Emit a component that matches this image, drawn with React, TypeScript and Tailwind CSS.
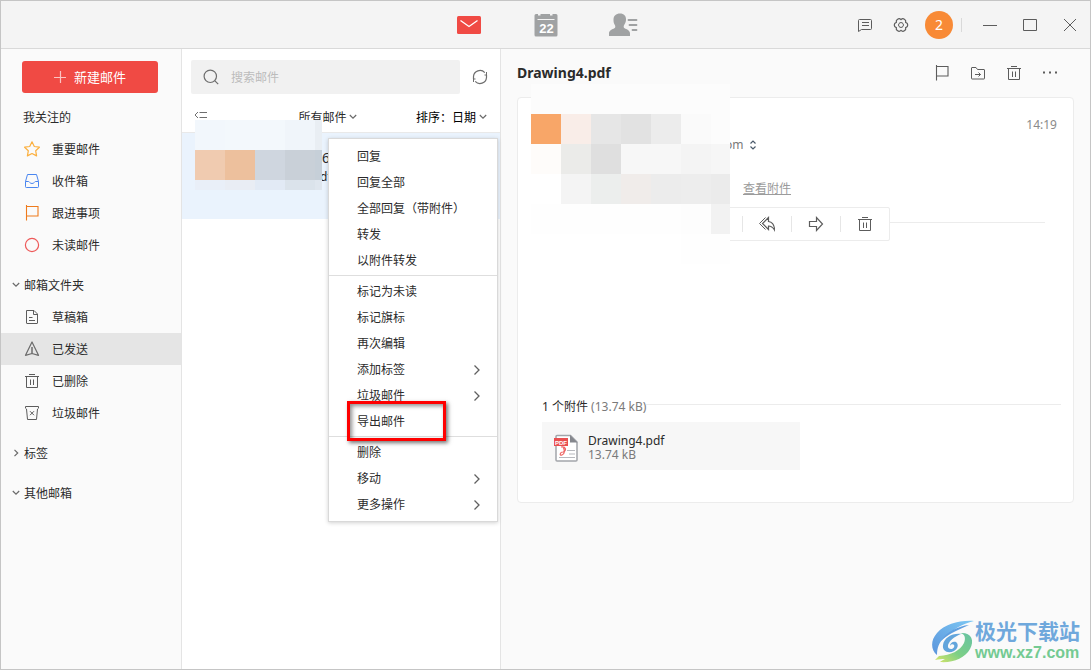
import React, { useState } from 'react';

interface GlyphProps {
  children: React.ReactNode;
  className?: string;
  size?: number;
}

const Glyph: React.FC<GlyphProps> = ({ children, className = '', size = 16 }) => (
  <svg
    width={size}
    height={size}
    viewBox="0 0 16 16"
    fill="none"
    stroke="currentColor"
    strokeWidth="1"
    className={`shrink-0 ${className}`}
    aria-hidden="true"
  >
    {children}
  </svg>
);

const StarIcon = () => (
  <Glyph className="text-[#fbb040]">
    <path
      d="M8 .8l2.3 4.7 5.1.7-3.7 3.6.9 5.1L8 12.5l-4.6 2.4.9-5.1L.6 6.2l5.1-.7z"
      strokeWidth="1.2"
      strokeLinejoin="round"
    />
  </Glyph>
);

const InboxIcon = () => (
  <Glyph className="text-[#4a86f0]">
    <path d="M3.5 1.5h9l2 7v5.2a.8.8 0 0 1-.8.8H2.3a.8.8 0 0 1-.8-.8V8.5z" strokeLinejoin="round" />
    <path d="M1.5 8.5h3c1 0 1.2 2 3.5 2s2.500-2 3.500-2h3" />
  </Glyph>
);

const FlagIcon = ({ className = '' }: { className?: string }) => (
  <Glyph className={className}>
    <path d="M2.500 0v15.500M2.500 1.500h11.500v9.500H2.500" strokeWidth="1.1" />
  </Glyph>
);

const CircleIcon = () => (
  <Glyph className="text-[#ee5a5a]">
    <circle cx="8" cy="8" r="6.600" strokeWidth="1.2" />
  </Glyph>
);

const DraftIcon = () => (
  <Glyph className="text-[#5c5c5c]">
    <path d="M2.500 1.500h7.500l3.500 3.500v9a.5.5 0 0 1-.5.5H3a.5.5 0 0 1-.5-.5zM9.500 1.500v4h4M5 8.500h3.500M5 11.500h6" />
  </Glyph>
);

const SentIcon = () => (
  <Glyph className="text-[#6b6b6b]">
    <path d="M8 1L1.500 14.300 8 12.500l6.500 1.800z" strokeWidth="1.200" strokeLinejoin="round" />
    <path d="M8 6v6.500" strokeWidth="1.500" />
  </Glyph>
);

const TrashIcon = () => (
  <Glyph className="text-[#5c5c5c]">
    <path d="M5 1.500h6M1 3.500h14M2.500 3.500v11h11v-11M6.500 6.500v5.500M9.500 6.500v5.500" />
  </Glyph>
);

const SpamIcon = () => (
  <Glyph className="text-[#5c5c5c]">
    <path d="M1.500 1.500h13v1.700l-1 .8-1 10.500h-9L2.500 4l-1-.8z" strokeLinejoin="round" />
    <path d="M6 6.200l4 4M10 6.200l-4 4" />
  </Glyph>
);

const Chevron = ({ direction }: { direction: 'down' | 'right' }) => (
  <svg
    width="8"
    height="10"
    viewBox="0 0 8 10"
    fill="none"
    stroke="#6a6a6a"
    strokeWidth="1.200"
    className="shrink-0"
    aria-hidden="true"
  >
    <path d={direction === 'down' ? 'M.8 3L4 6.200 7.200 3' : 'M2.500 1.800L5.700 5 2.500 8.200'} />
  </svg>
);

const MailIcon = () => (
  <svg width="24" height="18" viewBox="0 0 24 18" aria-hidden="true">
    <rect width="24" height="18" rx="1.500" fill="#f04a44" />
    <path d="M3.500 4.500L12 10.500l8.500-6" fill="none" stroke="#fff" strokeWidth="1.300" />
  </svg>
);

const CalendarIcon = () => (
  <svg width="24" height="24" viewBox="0 0 24 24" aria-hidden="true">
    <path
      d="M2 1h2v1.500h2.500V1h9.500v1.500h2.500V1H22q1.500 0 1.500 1.500V22q0 1.500-1.500 1.500H2Q.5 23.500.5 22V2.500Q.5 1 2 1z"
      fill="#a0a2a3"
    />
    <path d="M3.500 6.500h17" stroke="#f4f4f4" />
    <text x="12.500" y="19.500" textAnchor="middle" fontSize="13" fontWeight="700" fill="#fff" fontFamily="Liberation Sans, sans-serif">
      22
    </text>
  </svg>
);

const ContactIcon = () => (
  <svg width="30" height="24" viewBox="0 0 30 24" aria-hidden="true">
    <path
      d="M12 .5c4 0 6 2.400 6 6 0 2-.6 3.800-1.700 5.200-.9 1.100-.8 2.900.3 3.600 2 1.100 5.400 2 5.400 5.200v2.500H1v-2.500c0-3.200 3.400-4.100 5.400-5.200 1.100-.7 1.200-2.500.3-3.600C5.600 10.300 5.500 8.500 5.500 6.500c0-3.600 2.500-6 6.500-6z"
      fill="#a0a2a3"
    />
    <path d="M20.500 7h8M21.500 12h7M24.500 17h4" stroke="#a0a2a3" strokeWidth="1.800" strokeLinecap="round" />
  </svg>
);

const SwirlLogo = () => (
  <svg width="44" height="44" viewBox="0 0 44 44" aria-hidden="true">
    <defs>
      <linearGradient id="swirlBlue" x1="0" y1="1" x2="1" y2="0">
        <stop offset="0" stopColor="#5b95dc" />
        <stop offset="1" stopColor="#7cc8f4" />
      </linearGradient>
      <linearGradient id="swirlGreen" x1="0" y1="1" x2="1" y2="0">
        <stop offset="0" stopColor="#d9e667" />
        <stop offset=".45" stopColor="#7ccf86" />
        <stop offset="1" stopColor="#67c3a4" />
      </linearGradient>
    </defs>
    {/* outer blue crescent with its trailing streaks */}
    <path d="M43 2C29 1 14 5 6 14c-7 8-6 17 0 22 0-7 2-13 8-18C21 11 31 5 43 2z" fill="url(#swirlBlue)" />
    <path d="M38 6C27 7 15 13 10 22c3-3 7-6 11-8 5-3 11-5 17-8z" fill="#5f9fe0" />
    <path d="M30 15c-9-1-17 4-18 11-1 6 5 9 11 6 4-2 5-7 2-9-3-1-6 1-6 4 1-2 3-2 4-1 1 2-1 4-3 4-3 0-4-3-2-6 2-4 7-7 12-9z" fill="#62a5dc" />
    {/* green sweep */}
    <path d="M29 14c5 1 6 5 4 10-4 8-13 12-25 13l-4 4c4-1 7-1 10-1-2 1-4 2-5 3 13 1 25-4 30-13 5-9 1-17-10-16z" fill="url(#swirlGreen)" />
  </svg>
);

const PdfIcon = () => (
  <svg width="26" height="28" viewBox="0 0 26 28" aria-hidden="true">
    <path d="M3 1.500h13.500L23 8v18q0 1-1 1H3q-1 0-1-1V2.500q0-1 1-1z" fill="#fff" stroke="#a3a5aa" strokeWidth="1.500" />
    <path d="M16 1l7.500 7.500H16z" fill="#85878d" />
    <path d="M13 16.500h8M15 20h6M5 23.500h16" stroke="#b7b9be" />
    <rect y="4" width="14" height="8" fill="#e94f50" />
    <text x="7" y="10.500" textAnchor="middle" fontSize="6" fontWeight="700" fill="#fff" fontFamily="Liberation Sans, sans-serif">
      PDF
    </text>
    <path d="M7 13c5-1 6 4 2 5-3 0-4 4-1 3 3-1 3-5 1-8" fill="none" stroke="#ed6463" strokeWidth="1.200" />
  </svg>
);

const favorites = [
  { label: '重要邮件', icon: <StarIcon /> },
  { label: '收件箱', icon: <InboxIcon /> },
  { label: '跟进事项', icon: <FlagIcon className="text-[#ee7b1d]" /> },
  { label: '未读邮件', icon: <CircleIcon /> },
];

const folders = [
  { label: '草稿箱', icon: <DraftIcon /> },
  { label: '已发送', icon: <SentIcon /> },
  { label: '已删除', icon: <TrashIcon /> },
  { label: '垃圾邮件', icon: <SpamIcon /> },
];

const menuGroups = [
  [{ label: '回复' }, { label: '回复全部' }, { label: '全部回复（带附件）' }, { label: '转发' }, { label: '以附件转发' }],
  [
    { label: '标记为未读' },
    { label: '标记旗标' },
    { label: '再次编辑' },
    { label: '添加标签', submenu: true },
    { label: '垃圾邮件', submenu: true },
    { label: '导出邮件', marked: true },
  ],
  [{ label: '删除' }, { label: '移动', submenu: true }, { label: '更多操作', submenu: true }],
] as { label: string; submenu?: boolean; marked?: boolean }[][];

const listMosaic = [
  'bg-[#f2f7fc]', 'bg-[#f3f8fc]', 'bg-[#f3f8fc]', 'bg-[#f0f5fa]', 'bg-[#e9eef3]',
  'bg-[#f0cbb0]', 'bg-[#edc09d]', 'bg-[#cfd6df]', 'bg-[#c9d0d8]', 'bg-[#c6cfd8]',
  'bg-[#e9eff8]', 'bg-[#e9edf4]', 'bg-[#e2eaf5]', 'bg-[#dbe3eb]', 'bg-[#dfe6ee]',
];

const senderMosaic = [
  'bg-[#fcfcfc]', 'bg-[#fcfcfc]', 'bg-[#fcfcfc]', 'bg-[#fcfcfc]', 'bg-[#fcfcfc]', 'bg-[#fcfcfc]', 'bg-[#fcfcfc]',
  'bg-[#f8a668]', 'bg-[#f9ede8]', 'bg-[#e6e6e6]', 'bg-[#e2e2e2]', 'bg-[#ececec]', 'bg-[#fafafa]', 'bg-[#fcfcfc]',
  'bg-[#fefcfa]', 'bg-[#ebebe9]', 'bg-[#dfdfdf]', 'bg-[#f7f7f7]', 'bg-[#f7f7f7]', 'bg-[#f4f4f4]', 'bg-[#f6f6f6]',
  'bg-white', 'bg-[#f4f4f4]', 'bg-[#eceeed]', 'bg-[#f0ecea]', 'bg-[#ececec]', 'bg-[#ededed]', 'bg-[#ebebeb]',
  'bg-[#fefefe]', 'bg-[#fefefe]', 'bg-[#fefefe]', 'bg-[#fefefe]', 'bg-[#fefefe]', 'bg-[#fdfdfd]', 'bg-[#f2f2f2]',
  'bg-white', 'bg-white', 'bg-white', 'bg-white', 'bg-white', 'bg-[#fefefe]', 'bg-[#fefefe]',
];

const TopBar = () => (
  <header className="flex h-12 items-center border-b border-[#d9d9d9] bg-[#f4f4f4] text-[#5c5c5c]">
    <div className="flex-1" />
    <nav className="flex items-center gap-[29px]">
      <button aria-label="邮件" className="flex h-10 w-12 items-center justify-center"><MailIcon /></button>
      <button aria-label="日历" className="flex h-10 w-12 items-center justify-center"><CalendarIcon /></button>
      <button aria-label="联系人" className="flex h-10 w-12 items-center justify-center"><ContactIcon /></button>
    </nav>
    <div className="flex flex-1 items-center justify-end">
      <button aria-label="反馈" className="flex h-9 w-9 items-center justify-center">
        <Glyph>
          <path d="M2.500 2.500h11q1 0 1 1v8q0 1-1 1H4.500L1.500 14.500v-11q0-1 1-1zM5 5.500h7M5 8.500h7" />
        </Glyph>
      </button>
      <button aria-label="设置" className="flex h-9 w-9 items-center justify-center">
        <Glyph>
          <path
            d="M8 2.600A2.800 2.800 0 0 1 12.680 5.300 2.800 2.800 0 0 1 12.680 10.700 2.800 2.800 0 0 1 8 13.400 2.800 2.800 0 0 1 3.320 10.700 2.800 2.800 0 0 1 3.320 5.300 2.800 2.800 0 0 1 8 2.600z"
            strokeWidth="1.200"
          />
          <path d="M6.700 5.700h2.600L10.600 8l-1.300 2.300H6.700L5.400 8z" strokeLinejoin="round" />
        </Glyph>
      </button>
      <button className="ml-1.5 h-7 w-7 rounded-full bg-[#f88a36] text-sm text-white">2</button>
      <div className="ml-2 mr-2 h-3.5 w-px bg-[#d9d9d9]" />
      <button aria-label="最小化" className="flex h-10 w-10 items-center justify-center">
        <Glyph><path d="M1 8.500h14" /></Glyph>
      </button>
      <button aria-label="最大化" className="flex h-10 w-10 items-center justify-center">
        <Glyph><path d="M1.500 2.500h13v11h-13z" /></Glyph>
      </button>
      <button aria-label="关闭" className="flex h-10 w-10 items-center justify-center">
        <Glyph><path d="M2 2l12 12M14 2L2 14" /></Glyph>
      </button>
    </div>
  </header>
);

interface SectionTitleProps {
  label: string;
  direction: 'down' | 'right';
}

const SectionTitle: React.FC<SectionTitleProps> = ({ label, direction }) => (
  <button className="mt-2 flex h-8 w-full items-center gap-1 pl-[11px]">
    <Chevron direction={direction} />
    <span className="pt-0.5">{label}</span>
  </button>
);

const Sidebar = () => {
  const [selected, setSelected] = useState('已发送');

  const renderItem = ({ label, icon }: { label: string; icon: React.ReactNode }) => (
    <button
      key={label}
      onClick={() => setSelected(label)}
      className={`flex h-8 w-full items-center gap-3 pl-[23px] ${selected === label ? 'bg-[#e5e5e5]' : ''}`}
    >
      {icon}
      <span className="pt-0.5">{label}</span>
    </button>
  );

  return (
    <aside className="w-[181px] shrink-0 border-r border-[#e4e4e4] pt-3">
      <button className="mb-2 ml-[21px] flex h-8 w-[136px] items-center justify-center gap-1.5 rounded-[3px] bg-[#f04a44] pr-0.5 text-[13px] text-white">
        <Glyph className="text-[#fbc4c2]"><path d="M2 8.500h12M8.500 2v12" strokeWidth="1.200" /></Glyph>
        <span className="pt-0.5">新建邮件</span>
      </button>
      <h2 className="flex h-8 items-center pl-[22px] pt-0.5">我关注的</h2>
      {favorites.map(renderItem)}
      <SectionTitle label="邮箱文件夹" direction="down" />
      {folders.map(renderItem)}
      <SectionTitle label="标签" direction="right" />
      <SectionTitle label="其他邮箱" direction="down" />
    </aside>
  );
};

const ContextMenu = () => (
  <div className="absolute left-[146px] top-[89px] z-10 w-[170px] border border-[#d9d9d9] bg-white pb-[3px] pt-[5px] shadow-[0_1px_4px_rgba(0,0,0,0.18)]">
    {menuGroups.map((group, i) => (
      <div key={i} className={i > 0 ? 'mt-px border-t border-[#dedede] pt-[3px]' : ''}>
        {group.map((item) => (
          <button key={item.label} className="relative flex h-[26px] w-full items-center justify-between pl-7 pr-4">
            {item.label}
            {item.submenu && (
              <svg width="8" height="12" viewBox="0 0 8 12" fill="none" stroke="#606060" strokeWidth="1.300" aria-hidden="true">
                <path d="M1.500 1.500L6 6l-4.500 4.500" />
              </svg>
            )}
            {item.marked && (
              <span className="absolute -top-2 left-[18px] z-10 h-10 w-[99px] border-[3px] border-[#fe0000] shadow-[2px_2px_4px_rgba(0,0,0,0.55),inset_2px_2px_4px_rgba(0,0,0,0.45)]" />
            )}
          </button>
        ))}
      </div>
    ))}
  </div>
);

const MessageList = () => (
  <section className="relative w-[319px] shrink-0 border-r border-[#e4e4e4] bg-white pt-[11px]">
    <div className="flex items-center pl-[9px] pr-3">
      <label className="flex h-[34px] flex-1 items-center gap-3 rounded-[2px] bg-[#f1f1f1] pl-3">
        <svg width="16" height="16" viewBox="0 0 16 16" fill="none" stroke="#6e6e6e" strokeWidth="1.200" className="shrink-0" aria-hidden="true">
          <circle cx="7.300" cy="7.300" r="6.200" />
          <path d="M11.700 11.700l3.500 3.500" />
        </svg>
        <input
          type="text"
          aria-label="搜索邮件"
          placeholder="搜索邮件"
          className="w-full bg-transparent pt-0.5 placeholder:text-[#bcbcbc] focus:outline-none"
        />
      </label>
      <button aria-label="刷新" className="ml-3 text-[#6e6e6e]">
        <Glyph>
          <path
            d="M1.500 10V7.500A6.500 6.500 0 0 1 12.800 3.600M14.500 6v2.500A6.500 6.500 0 0 1 3.200 12.400"
            strokeWidth="1.200"
          />
          <path d="M14.500 3v3h-2M1.500 13v-3h2" />
        </Glyph>
      </button>
    </div>

    <div className="mt-2 flex h-[31px] items-center border-b border-[#e9e9e9] pl-3 pr-[13px]">
      <button aria-label="折叠列表" className="mb-1 text-[#6e6e6e]">
        <svg width="14" height="8" viewBox="0 0 14 8" fill="none" stroke="currentColor" aria-hidden="true">
          <path d="M4 1L1 4l3 3M5.500 1.500H13M5.500 6.500H13" />
        </svg>
      </button>
      <div className="flex flex-1 items-center justify-center gap-0.5 pl-8">
        <select aria-label="筛选" className="appearance-none bg-transparent pt-0.5">
          <option>所有邮件</option>
        </select>
        <Chevron direction="down" />
      </div>
      <label htmlFor="sort" className="pt-0.5 text-black">排序：</label>
      <select id="sort" className="mr-0.5 appearance-none bg-transparent pt-0.5 text-black">
        <option>日期</option>
      </select>
      <Chevron direction="down" />
    </div>

    <article className="relative h-[86px] bg-[#eaf3fd] pl-[138px] pt-4">
      <p className="pl-0.5 text-sm leading-[18px]">6</p>
      <p className="leading-5">df</p>
      <div className="absolute -top-[13px] left-[13px] grid grid-cols-[repeat(4,30px)_7px] grid-rows-[30px_30px_10px]">
        {listMosaic.map((color, i) => (
          <span key={i} className={color} />
        ))}
      </div>
    </article>

    <ContextMenu />
  </section>
);

const MessageView = () => (
  <main className="min-w-0 flex-1 px-4">
    <div className="flex h-12 items-center justify-between pr-1.5 text-[#5c5c5c]">
      <h1 className="text-sm font-bold text-[#2b2b2b]">Drawing4.pdf</h1>
      <div className="flex">
        <button aria-label="旗标" className="flex h-9 w-9 items-center justify-center"><FlagIcon /></button>
        <button aria-label="移动" className="flex h-9 w-9 items-center justify-center">
          <Glyph>
            <path d="M2 2.500h4l1.500 2H14q.5 0 .5.500v8.500q0 .5-.5.500H2q-.5 0-.5-.5V3q0-.5.5-.5zM5 9.500h5.500M8.500 7.500l2 2-2 2" />
          </Glyph>
        </button>
        <button aria-label="删除" className="flex h-9 w-9 items-center justify-center"><TrashIcon /></button>
        <button aria-label="更多" className="flex h-9 w-9 items-center justify-center">
          <Glyph>
            <path d="M1 7.500h2M7 7.500h2M13 7.500h2" strokeWidth="2" />
          </Glyph>
        </button>
      </div>
    </div>

    <article className="relative rounded border border-[#ececec] bg-white pb-8 pt-[17px]">
      <time className="block pr-4 text-right leading-5 text-[#8a8a8a]">14:19</time>
      <div className="flex h-5 items-center gap-1.5 pl-[207px] text-[#7a7a7a]">
        om
        <svg width="8" height="10" viewBox="0 0 8 10" fill="none" stroke="#4a5a6a" strokeWidth="1.200" aria-hidden="true">
          <path d="M1.500 3.500L4 1l2.500 2.500M1.500 6.500L4 9l2.500-2.500" />
        </svg>
      </div>
      <a href="#attachments" className="ml-[225px] mt-6 block w-fit leading-5 text-[#9b9b9b] underline">查看附件</a>

      <div className="mt-2 flex items-start pl-[175px] pr-7 text-[#5c5c5c]">
        <div className="flex h-[34px] items-center divide-x divide-[#e6e6e6] rounded-[2px] border border-[#ececec]">
          <button aria-label="回复" className="flex h-4 w-[49px] items-center justify-center">
            <Glyph><path d="M7 2L1 7.500 7 13v-3.500q5-.5 8 4-1-8-8-8z" /></Glyph>
          </button>
          <button aria-label="回复全部" className="flex h-4 w-[49px] items-center justify-center">
            <Glyph>
              <path d="M9.500 1.500L3.500 7.500l6 6V10q3.500 0 6 4 0-7.500-6-8.500z" strokeWidth="1.200" />
              <path d="M6.500 1.500l-6 6 6 6" />
            </Glyph>
          </button>
          <button aria-label="转发" className="flex h-4 w-[49px] items-center justify-center">
            <Glyph><path d="M1.500 5.500h7v-4l6 6.500-6 6.500v-4h-7z" strokeWidth="1.200" /></Glyph>
          </button>
          <button aria-label="删除" className="flex h-4 w-12 items-center justify-center"><TrashIcon /></button>
        </div>
        <div className="mt-[15px] h-px flex-1 bg-[#ececec]" />
      </div>

      <section id="attachments" className="mt-[156px] pl-6 pr-3">
        <h2 className="flex h-5 items-center">
          <span className="whitespace-pre">1 个附件 </span>
          <span className="text-[#7a7a7a]">(13.74 kB)</span>
          <span className="mb-1.5 h-px flex-1 bg-[#ececec]" />
        </h2>
        <div className="mt-[5px] flex h-12 w-[258px] items-center gap-2 bg-[#f7f7f7] pl-3 pt-1">
          <PdfIcon />
          <div className="leading-[14px]">
            <p>Drawing4.pdf</p>
            <p className="text-[#7a7a7a]">13.74 kB</p>
          </div>
        </div>
      </section>

      <div className="absolute -top-3.5 left-[13px] grid auto-rows-[30px] grid-cols-[repeat(6,30px)_19px]" aria-hidden="true">
        {senderMosaic.map((color, i) => (
          <span key={i} className={color} />
        ))}
      </div>
    </article>
  </main>
);

const App: React.FC = () => (
  <div className="relative flex min-h-screen flex-col border border-[#c5c5c5] bg-[#fafafa] font-['Noto_Sans','Noto_Sans_CJK_SC',sans-serif] text-xs text-[#2b2b2b]">
    <TopBar />
    <div className="flex flex-1">
      <Sidebar />
      <MessageList />
      <MessageView />
    </div>
    <div className="absolute bottom-1.5 right-2.5 flex items-center">
      <SwirlLogo />
      <div>
        <p className="text-[21px] font-bold leading-6 text-[#6fa8dc]">极光下载站</p>
        <p className="font-['Liberation_Sans',sans-serif] text-base font-bold leading-5 text-[#74ca92]">www.xz7.com</p>
      </div>
    </div>
  </div>
);

export default App;
